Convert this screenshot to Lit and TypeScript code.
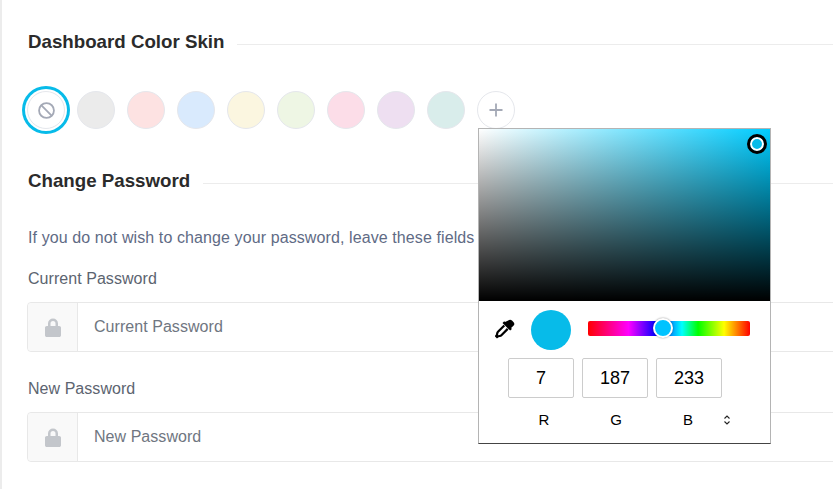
import { LitElement, html, css, svg } from "lit";
import { customElement } from "lit/decorators.js";

const lock = svg`<svg class="lock" width="16" height="19" viewBox="0 0 16 19"><path fill="#c3c6cb" d="M3 8V5.500a5 5 0 0 1 10 0V8h1.200c1 0 1.800.8 1.800 1.800v7.400c0 1-.8 1.800-1.800 1.800H1.800C.8 19 0 18.200 0 17.200V9.800C0 8.800.8 8 1.800 8H3zm2.500 0h5V5.500a2.500 2.500 0 0 0-5 0V8z"/></svg>`;

@customElement("app-root")
export class AppRoot extends LitElement {
  static styles = css`
    :host {
      display: block;
      width: 833px;
      height: 489px;
      overflow: hidden;
      position: relative;
      background: #fff;
      font-family: "Liberation Sans", Arial, sans-serif;
      box-sizing: border-box;
      border-left: 2px solid #ececec;
    }
    .content {
      padding: 31px 0 0 25px;
      width: 900px;
      box-sizing: border-box;
    }
    .title {
      display: flex;
      align-items: center;
      gap: 13px;
      padding-left: 1px;
      font-size: 18.72px;
      font-weight: 700;
      line-height: 22px;
      color: #2b2b2b;
      white-space: nowrap;
    }
    .title::after {
      content: "";
      flex: 1;
      height: 1px;
      margin-top: 4px;
      background: #ececec;
    }
    .swatches {
      display: flex;
      gap: 12px;
      margin: 38px 0 41px;
      height: 38px;
      align-items: center;
    }
    .sw {
      width: 38px;
      height: 38px;
      border-radius: 50%;
      box-sizing: border-box;
      border: 1px solid #e5e7ec;
      display: flex;
      align-items: center;
      justify-content: center;
      flex: none;
    }
    .sw.none {
      background: #fff;
      box-shadow: 0 0 0 2px #fff, 0 0 0 5px #07bbe9;
    }
    .c1 { background: #ebebeb; }
    .c2 { background: #fde2e2; }
    .c3 { background: #d9eafd; }
    .c4 { background: #fbf6e0; }
    .c5 { background: #eef6e4; }
    .c6 { background: #fcdde8; }
    .c7 { background: #eedff1; }
    .c8 { background: #d9edeb; }
    .note {
      margin: 34px 0 0;
      padding-left: 1px;
      font-size: 16px;
      line-height: 24px;
      letter-spacing: 0.1px;
      color: #5f6b85;
      white-space: nowrap;
    }
    .label {
      margin-top: 17px;
      padding-left: 1px;
      font-size: 16px;
      line-height: 24px;
      letter-spacing: 0.05px;
      color: #5c6470;
    }
    .group {
      display: flex;
      height: 50px;
      margin-top: 11px;
      border: 1px solid #e8e8e8;
      border-radius: 4px;
      box-sizing: border-box;
    }
    .group + .label { margin-top: 25px; }
    .addon {
      width: 50px;
      flex: none;
      background: #f9f9f9;
      border-right: 1px solid #e8e8e8;
      display: flex;
      align-items: center;
      justify-content: center;
      border-radius: 4px 0 0 4px;
      box-sizing: border-box;
    }
    .placeholder {
      padding-left: 16px;
      display: flex;
      align-items: center;
      font-size: 16px;
      letter-spacing: 0.05px;
      color: #6f7681;
    }
    .picker {
      position: absolute;
      left: 476px;
      top: 128px;
      width: 293px;
      height: 316px;
      box-sizing: border-box;
      background: #fff;
      border: 1px solid #b4b4b4;
      border-bottom: 1px solid #444;
    }
    .sat {
      height: 172px;
      position: relative;
      background:
        linear-gradient(to top, #000, rgba(0, 0, 0, 0)),
        linear-gradient(to right, #fff, #00ccff);
    }
    .cursor {
      position: absolute;
      left: 270.5px;
      top: 8px;
      width: 10px;
      height: 10px;
      border-radius: 50%;
      border: 2px solid #fff;
      outline: 3px solid #000;
      background: #07bbe9;
      box-sizing: content-box;
    }
    .controls {
      display: flex;
      align-items: center;
      height: 56px;
      padding-left: 16px;
    }
    .dropper { flex: none; display: block; }
    .preview {
      width: 40px;
      height: 40px;
      border-radius: 50%;
      background: #07bbe9;
      margin: 2px 0 0 16px;
      flex: none;
    }
    .hue {
      width: 162px;
      height: 15px;
      margin: 0 0 1px 17px;
      border-radius: 2px;
      position: relative;
      background: linear-gradient(to right, #f00, #f0f 25%, #00f 42%, #0ff 58%, #0f0 68%, #ff0 84%, #f00);
    }
    .thumb {
      position: absolute;
      left: 65px;
      top: -3px;
      width: 20px;
      height: 20px;
      box-sizing: border-box;
      border-radius: 50%;
      border: 2px solid #fff;
      background: #00c3ff;
      box-shadow: 0 0 2px rgba(0, 0, 0, 0.45);
    }
    .inputs {
      display: flex;
      gap: 8px;
      padding-left: 29px;
      margin-top: 1px;
    }
    .num {
      width: 66px;
      height: 40px;
      box-sizing: border-box;
      border: 1px solid #ccc;
      border-radius: 2px;
      display: flex;
      align-items: center;
      justify-content: center;
      font-size: 18px;
      color: #000;
    }
    .letters {
      display: flex;
      gap: 6px;
      padding-left: 32px;
      margin-top: 12px;
      align-items: center;
      font-size: 15px;
      line-height: 20px;
      color: #000;
    }
    .letters span {
      width: 66px;
      text-align: center;
    }
    .letters svg {
      flex: none;
      margin-left: -4px;
    }
  `;

  render() {
    const colors = ["c1", "c2", "c3", "c4", "c5", "c6", "c7", "c8"];
    return html`
      <div class="content">
        <div class="title">Dashboard Color Skin</div>
        <div class="swatches">
          <div class="sw none">
            <svg width="17" height="17" viewBox="0 0 16 16" fill="none" stroke="#a4a9b6" stroke-width="1.700">
              <circle cx="8" cy="8" r="7" /><path d="M3 3l10 10" />
            </svg>
          </div>
          ${colors.map((c) => html`<div class="sw ${c}"></div>`)}
          <div class="sw">
            <svg width="14" height="14" viewBox="0 0 14 14" stroke="#a4a9b6" stroke-width="1.800" fill="none">
              <path d="M7 0.500v13M0.500 7h13" />
            </svg>
          </div>
        </div>
        <div class="title">Change Password</div>
        <p class="note">If you do not wish to change your password, leave these fields blank.</p>
        <div class="label">Current Password</div>
        <div class="group">
          <div class="addon">${lock}</div>
          <div class="placeholder">Current Password</div>
        </div>
        <div class="label">New Password</div>
        <div class="group">
          <div class="addon">${lock}</div>
          <div class="placeholder">New Password</div>
        </div>
      </div>
      <div class="picker">
        <div class="sat"><div class="cursor"></div></div>
        <div class="controls">
          <svg class="dropper" width="20" height="20" viewBox="0 0 20 20">
            <path fill="#000" d="M13.200 1.600a2.700 2.700 0 0 1 3.800 0l1.400 1.400a2.700 2.700 0 0 1 0 3.800l-2.300 2.300.8.800-1.700 1.700-7.700-7.700 1.700-1.700.8.800z" />
            <path fill="none" stroke="#000" stroke-width="2.200" d="M9.300 6.500 3 12.800c-.5.500-.7 1.100-.8 1.700l-.2 1.300-.9 1.300 1 1 1.300-.9 1.300-.2c.6-.1 1.200-.3 1.700-.8l6.300-6.300" />
          </svg>
          <div class="preview"></div>
          <div class="hue"><div class="thumb"></div></div>
        </div>
        <div class="inputs">
          <div class="num">7</div>
          <div class="num">187</div>
          <div class="num">233</div>
        </div>
        <div class="letters">
          <span>R</span><span>G</span><span>B</span>
          <svg width="8" height="12" viewBox="0 0 8 12" fill="none" stroke="#222" stroke-width="1.100">
            <path d="M1.500 4.500 4 2l2.500 2.500M1.500 7.500 4 10l2.500-2.500" />
          </svg>
        </div>
      </div>
    `;
  }
}
